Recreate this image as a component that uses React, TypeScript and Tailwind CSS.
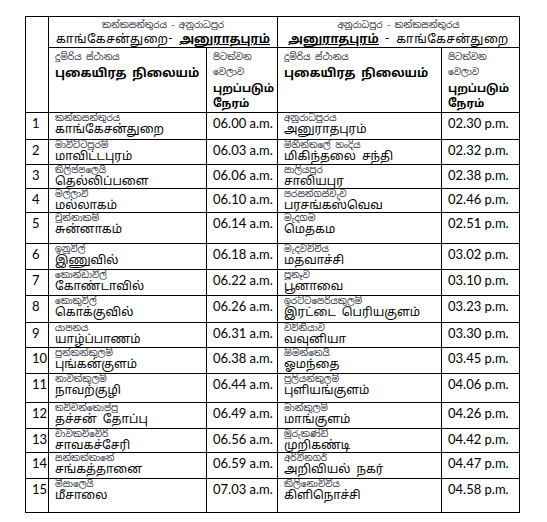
const rows = [
  { n: "1", si: "කන්කසන්තුරය", ta: "காங்கேசன்துறை", t: "06.00 a.m.", si2: "අනුරාධපුරය", ta2: "அனுராதபுரம்", t2: "02.30 p.m.", h: "h-[27px]" },
  { n: "2", si: "මාවිට්ටපුරම්", ta: "மாவிட்டபுரம்", t: "06.03 a.m.", si2: "මිහින්තලේ හංදිය", ta2: "மிகிந்தலை சந்தி", t2: "02.32 p.m.", h: "h-[25px]" },
  { n: "3", si: "තිලිප්පලෙයි", ta: "தெல்லிப்பளை", t: "06.06 a.m.", si2: "සාලියපුර", ta2: "சாலியபுர", t2: "02.38 p.m.", h: "h-[23px]" },
  { n: "4", si: "මල්ලාවි", ta: "மல்லாகம்", t: "06.10 a.m.", si2: "පරසන්ගස්වැව", ta2: "பரசங்கஸ்வெவ", t2: "02.46 p.m.", h: "h-[24px]" },
  { n: "5", si: "චුන්නාකම්", ta: "சுன்னாகம்", t: "06.14 a.m.", si2: "මැදගම", ta2: "மெதகம", t2: "02.51 p.m.", h: "h-[31px]" },
  { n: "6", si: "ඉනුවිල්", ta: "இணுவில்", t: "06.18 a.m.", si2: "මැදවච්චිය", ta2: "மதவாச்சி", t2: "03.02 p.m.", h: "h-[26px]" },
  { n: "7", si: "කොන්ඩාවිල්", ta: "கோண்டாவில்", t: "06.22 a.m.", si2: "පූනෑව", ta2: "பூனாவை", t2: "03.10 p.m.", h: "h-[26px]" },
  { n: "8", si: "කොකුවිල්", ta: "கொக்குவில்", t: "06.26 a.m.", si2: "ඉරට්ටපෙරියකුලම්", ta2: "இரட்டை பெரியகுளம்", t2: "03.23 p.m.", h: "h-[27px]" },
  { n: "9", si: "යාපනය", ta: "யாழ்ப்பாணம்", t: "06.31 a.m.", si2: "වව්නියාව", ta2: "வவுனியா", t2: "03.30 p.m.", h: "h-[25px]" },
  { n: "10", si: "පුන්කන්කුලම්", ta: "புங்கன்குளம்", t: "06.38 a.m.", si2: "ඕමන්තෙයි", ta2: "ஓமந்தை", t2: "03.45 p.m.", h: "h-[26px]" },
  { n: "11", si: "නාවත්කුලම්", ta: "நாவற்குழி", t: "06.44 a.m.", si2: "පුලියන්කුලම්", ta2: "புளியங்குளம்", t2: "04.06 p.m.", h: "h-[29px]" },
  { n: "12", si: "තච්චන්තොප්පු", ta: "தச்சன் தோப்பு", t: "06.49 a.m.", si2: "මාන්කුලම්", ta2: "மாங்குளம்", t2: "04.26 p.m.", h: "h-[26px]" },
  { n: "13", si: "චාවකච්චේරි", ta: "சாவகச்சேரி", t: "06.56 a.m.", si2: "මුරුකණ්ඩි", ta2: "முறிகண்டி", t2: "04.42 p.m.", h: "h-[23px]" },
  { n: "14", si: "සන්කත්තානේ", ta: "சங்கத்தானை", t: "06.59 a.m.", si2: "අරිවිනගර්", ta2: "அறிவியல் நகர்", t2: "04.47 p.m.", h: "h-[26px]" },
  { n: "15", si: "මීසාලෙයි", ta: "மீசாலை", t: "07.03 a.m.", si2: "කිලිනොච්චිය", ta2: "கிளிநொச்சி", t2: "04.58 p.m.", h: "h-[34px]" },
];

const indic = "font-['Noto_Sans_Sinhala','Noto_Sans_Tamil','Noto_Sans',sans-serif]";
const latin = "font-['Lato','Liberation_Sans',sans-serif]";
const cell = "border border-black align-top p-0 overflow-hidden";

function Station({ si, ta }: { si: string; ta: string }) {
  return (
    <div className={`pl-[6px] whitespace-nowrap ${indic}`}>
      <div className="text-[9px] leading-[10px] text-gray-800">{si}</div>
      <div className="text-[12px] leading-[13px] text-black">{ta}</div>
    </div>
  );
}

function TimeHead() {
  return (
    <div className={`pl-[6px] pt-[2px] whitespace-nowrap ${indic}`}>
      <div className="text-[9px] leading-[15px] text-gray-800">පිටත්වන</div>
      <div className="text-[9px] leading-[15px] text-gray-800">වෙලාව</div>
      <div className="text-[11px] leading-[16px] font-bold text-black">புறப்படும்</div>
      <div className="text-[11px] leading-[15px] font-bold text-black">நேரம்</div>
    </div>
  );
}

function StationHead() {
  return (
    <div className={`pl-[6px] pt-[2px] whitespace-nowrap ${indic}`}>
      <div className="text-[9px] leading-[15px] text-gray-800">දුම්රිය ස්ථානය</div>
      <div className="text-[12px] leading-[17px] font-bold text-black">புகையிரத நிலையம்</div>
    </div>
  );
}

function TimeCell({ v }: { v: string }) {
  return (
    <div className={`pl-[6px] pt-[2px] text-[13px] leading-[16px] whitespace-nowrap ${latin}`}>{v}</div>
  );
}

export default function App() {
  return (
    <div className="min-h-screen w-full bg-white">
      <div className="pl-[25px] pt-[16px]">
        <table className="table-fixed border-collapse w-[495px] text-black">
          <colgroup>
            <col className="w-[23px]" />
            <col className="w-[158px]" />
            <col className="w-[71px]" />
            <col className="w-[164px]" />
            <col className="w-[78px]" />
          </colgroup>
          <tbody>
            <tr className="h-[31px]">
              <td rowSpan={2} className={cell}></td>
              <td colSpan={2} className={`${cell} text-center whitespace-nowrap ${indic}`}>
                <div className="text-[9px] leading-[13px] pt-[2px] text-gray-800">කන්කසන්තුරය - අනුරාධපුර</div>
                <div className="text-[12px] leading-[15px]">
                  <span className="tracking-[0.5px]">காங்கேசன்துறை- </span>
                  <span className="font-bold underline">அனுராதபுரம்</span>
                </div>
              </td>
              <td colSpan={2} className={`${cell} text-center whitespace-nowrap ${indic}`}>
                <div className="text-[9px] leading-[13px] pt-[2px] text-gray-800">අනුරාධපුර - කන්කසන්තුරය</div>
                <div className="text-[12px] leading-[15px]">
                  <span className="font-bold underline">அனுராதபுரம்</span>
                  <span className="tracking-[0.5px]"> - காங்கேசன்துறை</span>
                </div>
              </td>
            </tr>
            <tr className="h-[65px]">
              <td className={cell}><StationHead /></td>
              <td className={cell}><TimeHead /></td>
              <td className={cell}><StationHead /></td>
              <td className={cell}><TimeHead /></td>
            </tr>
            {rows.map((r) => (
              <tr key={r.n} className={r.h}>
                <td className={cell}><TimeCell v={r.n} /></td>
                <td className={cell}><Station si={r.si} ta={r.ta} /></td>
                <td className={cell}><TimeCell v={r.t} /></td>
                <td className={cell}><Station si={r.si2} ta={r.ta2} /></td>
                <td className={cell}><TimeCell v={r.t2} /></td>
              </tr>
            ))}
          </tbody>
        </table>
      </div>
    </div>
  );
}
